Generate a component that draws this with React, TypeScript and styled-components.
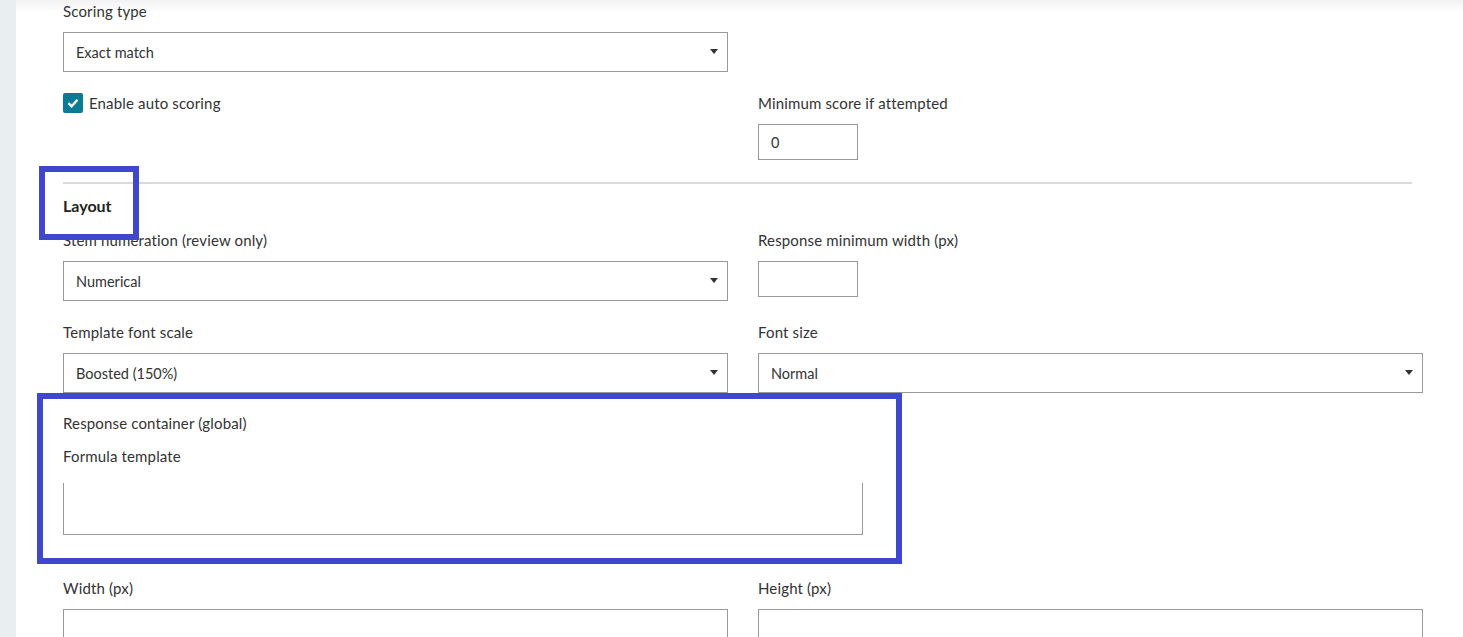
import * as React from "react";
import { FunctionComponent, ReactNode } from "react";
import styled, { createGlobalStyle } from "styled-components";

const GlobalStyle = createGlobalStyle`
    html, body {
        margin: 0;
        padding: 0;
        overflow: hidden;
        background: #ffffff;
    }

    body {
        font-family: Lato, "Open Sans", sans-serif;
        font-size: 15px;
        color: #333333;
    }
`;

type FieldProps = {
    label: ReactNode;
    children: ReactNode;
};

const Field: FunctionComponent<FieldProps> = ({ label, children }) => (
    <FieldRoot>
        <Label>{label}</Label>
        {children}
    </FieldRoot>
);

const Select: FunctionComponent<{ value?: string }> = ({ value }) => (
    <SelectBox>
        <span>{value}</span>
        <Caret />
    </SelectBox>
);

const CheckIcon = () => (
    <svg width="12" height="10" viewBox="0 0 12 10" aria-hidden="true">
        <path d="M1.5 5.2 L4.6 8.2 L10.5 1.8" fill="none" stroke="#ffffff" strokeWidth="2.4" />
    </svg>
);

export default function App() {
    return (
        <Root>
            <GlobalStyle />
            <SideStrip />
            <Panel>
                <TopShade />
                <Row>
                    <Field label="Scoring type">
                        <Select value="Exact match" />
                    </Field>
                </Row>
                <Row $top={20}>
                    <CheckRow>
                        <CheckBox>
                            <CheckIcon />
                        </CheckBox>
                        Enable auto scoring
                    </CheckRow>
                    <Field label="Minimum score if attempted">
                        <SmallInput>0</SmallInput>
                    </Field>
                </Row>
                <Divider />
                <Heading>Layout</Heading>
                <Row $top={12}>
                    <Field label="Stem numeration (review only)">
                        <Select value="Numerical" />
                    </Field>
                    <Field label="Response minimum width (px)">
                        <SmallInput />
                    </Field>
                </Row>
                <Row $top={20}>
                    <Field label="Template font scale">
                        <Select value="Boosted (150%)" />
                    </Field>
                    <Field label="Font size">
                        <Select value="Normal" />
                    </Field>
                </Row>
                <Block>
                    <Label>Response container (global)</Label>
                    <SubLabel>Formula template</SubLabel>
                    <FormulaArea />
                </Block>
                <Row $top={42}>
                    <Field label="Width (px)">
                        <WideInput />
                    </Field>
                    <Field label="Height (px)">
                        <WideInput />
                    </Field>
                </Row>
            </Panel>
            <Annotation style={{ left: 39, top: 166, width: 100, height: 74 }} />
            <Annotation style={{ left: 37, top: 393, width: 865, height: 171 }} />
        </Root>
    );
}

const Root = styled.div`
    position: relative;
    display: flex;
    width: 1463px;
    height: 637px;
    overflow: hidden;
`;

const SideStrip = styled.div`
    flex: 0 0 16px;
    background: #e9eff1;
`;

const Panel = styled.div`
    position: relative;
    flex: 1;
    display: flex;
    flex-direction: column;
    padding: 0 0 0 47px;
    background: #ffffff;

    & > * {
        flex-shrink: 0;
    }
`;

const TopShade = styled.div`
    position: absolute;
    top: 0;
    left: 0;
    right: 0;
    height: 12px;
    background: linear-gradient(to bottom, rgba(0, 0, 0, 0.05), rgba(0, 0, 0, 0));
    pointer-events: none;
`;

const Row = styled.div<{ $top?: number }>`
    display: grid;
    grid-template-columns: 665px 665px;
    column-gap: 30px;
    margin-top: ${({ $top }) => $top ?? 0}px;
`;

const FieldRoot = styled.div`
    display: flex;
    flex-direction: column;
    align-items: flex-start;
`;

const Label = styled.div`
    line-height: 22px;
    margin-bottom: 10px;
    letter-spacing: 0.15px;
`;

const SubLabel = styled.div`
    line-height: 22px;
    margin-top: 11px;
    letter-spacing: 0.15px;
`;

const SelectBox = styled.div`
    box-sizing: border-box;
    display: flex;
    align-items: center;
    justify-content: space-between;
    width: 100%;
    height: 40px;
    padding: 0 9px 0 12px;
    border: 1px solid #999999;
    background: #ffffff;
    font-size: 14.5px;
`;

const Caret = styled.span`
    width: 0;
    height: 0;
    border-left: 4px solid transparent;
    border-right: 4px solid transparent;
    border-top: 5px solid #333333;
    margin-top: -1px;
`;

const SmallInput = styled.div`
    box-sizing: border-box;
    display: flex;
    align-items: center;
    width: 100px;
    height: 36px;
    padding: 0 12px;
    border: 1px solid #999999;
    font-size: 14.5px;
`;

const WideInput = styled.div`
    box-sizing: border-box;
    width: 100%;
    height: 40px;
    border: 1px solid #999999;
`;

const CheckRow = styled.div`
    display: flex;
    align-items: center;
    gap: 6px;
    height: 22px;
    letter-spacing: 0.15px;
`;

const CheckBox = styled.span`
    display: flex;
    align-items: center;
    justify-content: center;
    width: 20px;
    height: 20px;
    border-radius: 2px;
    background: #0b7b95;
`;

const Divider = styled.div`
    width: 1349px;
    height: 2px;
    margin-top: 22px;
    background: #dadada;
`;

const Heading = styled.div`
    margin-top: 11px;
    font-size: 16px;
    font-weight: 700;
    line-height: 22px;
    color: #222222;
`;

const Block = styled.div`
    display: flex;
    flex-direction: column;
    margin-top: 19px;

    ${Label} {
        margin-bottom: 0;
    }
`;

const FormulaArea = styled.div`
    box-sizing: border-box;
    width: 800px;
    height: 52px;
    margin-top: 16px;
    border: 1px solid #999999;
    border-top: none;
`;

const Annotation = styled.div`
    position: absolute;
    box-sizing: border-box;
    border: 6px solid #3f48cc;
    pointer-events: none;
`;
